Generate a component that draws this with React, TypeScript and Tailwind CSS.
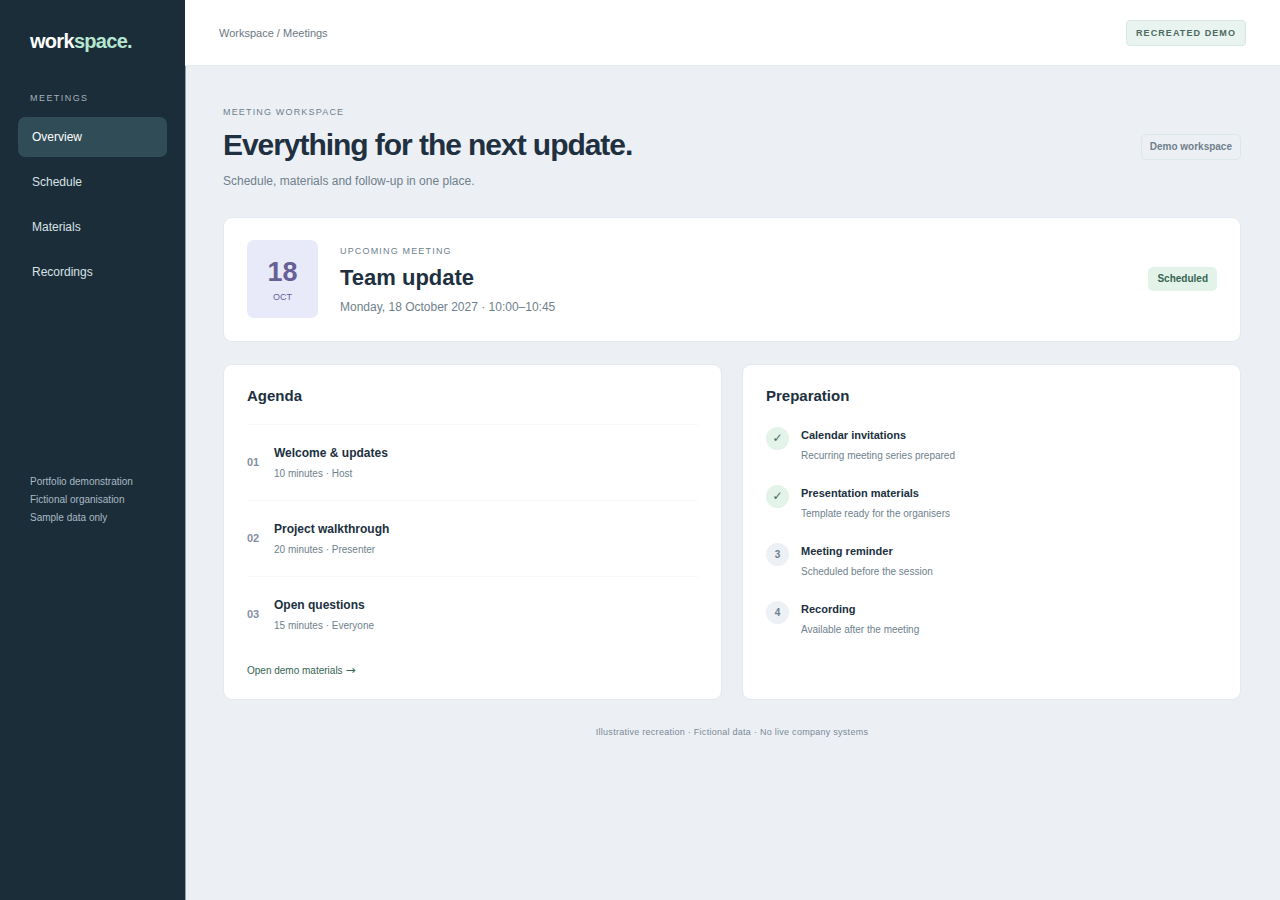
import React from "react";
import clsx from "clsx";

const navItems = ["Overview", "Schedule", "Materials", "Recordings"];

const agenda = [
  { number: "01", title: "Welcome & updates", detail: "10 minutes · Host" },
  { number: "02", title: "Project walkthrough", detail: "20 minutes · Presenter" },
  { number: "03", title: "Open questions", detail: "15 minutes · Everyone" },
];

const preparation = [
  { title: "Calendar invitations", detail: "Recurring meeting series prepared", done: true },
  { title: "Presentation materials", detail: "Template ready for the organisers", done: true },
  { title: "Meeting reminder", detail: "Scheduled before the session", done: false },
  { title: "Recording", detail: "Available after the meeting", done: false },
];

const Sidebar = () => (
  <aside className="w-[185px] shrink-0 bg-[#1b2d38] px-[18px] pt-7">
    <div className="px-3 text-[20px] leading-[26px] font-bold tracking-[-0.035em] text-white">
      work<span className="text-[#b5e6d2]">space.</span>
    </div>
    <p className="mt-9 px-3 text-[9px] leading-4 tracking-[0.16em] text-[#a3b1bb]">
      MEETINGS
    </p>
    <nav className="mt-[11px] flex flex-col gap-[5px]">
      {navItems.map((item, index) => (
        <a
          key={item}
          href="#"
          aria-current={index === 0 ? "page" : undefined}
          className={clsx(
            "rounded-[7px] px-3.5 text-[12px] leading-10",
            index === 0 ? "bg-[#304c56] text-white" : "text-[#d8e3e6]"
          )}
        >
          {item}
        </a>
      ))}
    </nav>
    <div className="mt-[181px] px-3 text-[10px] leading-[18px] text-[#a9b9c6]">
      <p>Portfolio demonstration</p>
      <p>Fictional organisation</p>
      <p>Sample data only</p>
    </div>
  </aside>
);

const Card = ({ className, children }: { className?: string; children: React.ReactNode }) => (
  <section className={clsx("rounded-[9px] border border-[#e4e9ed] bg-white px-[23px]", className)}>
    {children}
  </section>
);

const App = () => {
  return (
    <div className="flex min-h-screen bg-[#ecf0f5] font-['Liberation_Sans',Arial,sans-serif] text-[#203040]">
      <Sidebar />

      <div className="flex min-w-0 flex-1 flex-col">
        <header className="flex h-[66px] items-center justify-between border-b border-[#e6ebef] bg-white px-[34px]">
          <p className="text-[11px] leading-4 text-[#6c7882]">Workspace / Meetings</p>
          <span className="rounded-[4px] border border-[#d8e8e3] bg-[#e9f3f0] px-[9px] text-[9px] leading-6 font-bold tracking-[0.12em] text-[#4c6a62]">
            RECREATED DEMO
          </span>
        </header>

        <main className="flex-1 border-l border-[#929fa9] pt-[38px] pr-[39px] pl-[37px]">
          <div className="flex items-center justify-between">
            <div>
              <p className="text-[9px] leading-4 tracking-[0.13em] text-[#6f7f8c]">
                MEETING WORKSPACE
              </p>
              <h1 className="mt-1.5 text-[30px] leading-[38px] font-bold tracking-[-0.035em]">
                Everything for the next update.
              </h1>
              <p className="mt-2 text-[12px] leading-[18px] text-[#6f7f8c]">
                Schedule, materials and follow-up in one place.
              </p>
            </div>
            <span className="rounded-[5px] border border-[#dce7e8] px-2 text-[10px] leading-6 font-bold text-[#6f7f8c]">
              Demo workspace
            </span>
          </div>

          <Card className="mt-[27px] flex items-center gap-[22px] pt-[22px] pb-[23px]">
            <div className="flex h-[78px] w-[71px] flex-col items-center rounded-[7px] bg-[#e8eaf9] pt-4 text-[#675f96]">
              <span className="text-[27px] leading-8 font-bold">18</span>
              <span className="mt-1 text-[9px] leading-[10px]">OCT</span>
            </div>
            <div className="flex-1">
              <p className="text-[9px] leading-4 tracking-[0.13em] text-[#6f7f8c]">
                UPCOMING MEETING
              </p>
              <h2 className="mt-1 text-[22px] leading-[30px] font-bold">Team update</h2>
              <p className="mt-[5px] text-[12px] leading-[18px] text-[#6f7f8c]">
                Monday, 18 October 2027 · 10:00–10:45
              </p>
            </div>
            <span className="rounded-[5px] bg-[#e3f3ea] px-[9px] text-[10px] leading-6 font-bold text-[#356452]">
              Scheduled
            </span>
          </Card>

          <div className="mt-[22px] grid grid-cols-2 gap-5">
            <Card className="pt-[22px] pb-5">
              <h2 className="text-[15px] leading-[18px] font-bold">Agenda</h2>
              <ol className="mt-[19px]">
                {agenda.map((item) => (
                  <li
                    key={item.number}
                    className="flex h-[76px] items-center border-t border-[#f5f7f8]"
                  >
                    <span className="w-[27px] text-[11px] font-bold text-[#8490a3]">
                      {item.number}
                    </span>
                    <div>
                      <h3 className="text-[12px] leading-[18px] font-bold">{item.title}</h3>
                      <p className="mt-[5px] text-[10px] leading-[14px] text-[#6f7f8c]">
                        {item.detail}
                      </p>
                    </div>
                  </li>
                ))}
              </ol>
              <a href="#" className="mt-2.5 block text-[10px] leading-4 text-[#356452]">
                Open demo materials{" "}
                <span className="font-['DejaVu_Sans',sans-serif] text-[12px]">→</span>
              </a>
            </Card>

            <Card className="pt-[22px] pb-5">
              <h2 className="text-[15px] leading-[18px] font-bold">Preparation</h2>
              <ul className="mt-[22px] flex flex-col gap-[22px]">
                {preparation.map((item, index) => (
                  <li key={item.title} className="flex gap-3">
                    <span
                      className={clsx(
                        "h-[23px] w-[23px] rounded-full text-center leading-[23px]",
                        item.done
                          ? "bg-[#e3f3ea] font-['DejaVu_Sans',sans-serif] text-[12px] text-[#3f6656]"
                          : "bg-[#edf1f5] text-[10px] font-bold text-[#6f7f8c]"
                      )}
                    >
                      {item.done ? "✓" : index + 1}
                    </span>
                    <div>
                      <h3 className="text-[11px] leading-4 font-bold">{item.title}</h3>
                      <p className="mt-1.5 text-[10px] leading-[14px] text-[#6f7f8c]">
                        {item.detail}
                      </p>
                    </div>
                  </li>
                ))}
              </ul>
            </Card>
          </div>

          <footer className="mt-6 pb-6 text-center text-[9px] leading-4 tracking-[0.03em] text-[#7b8995]">
            Illustrative recreation · Fictional data · No live company systems
          </footer>
        </main>
      </div>
    </div>
  );
};

export default App;
